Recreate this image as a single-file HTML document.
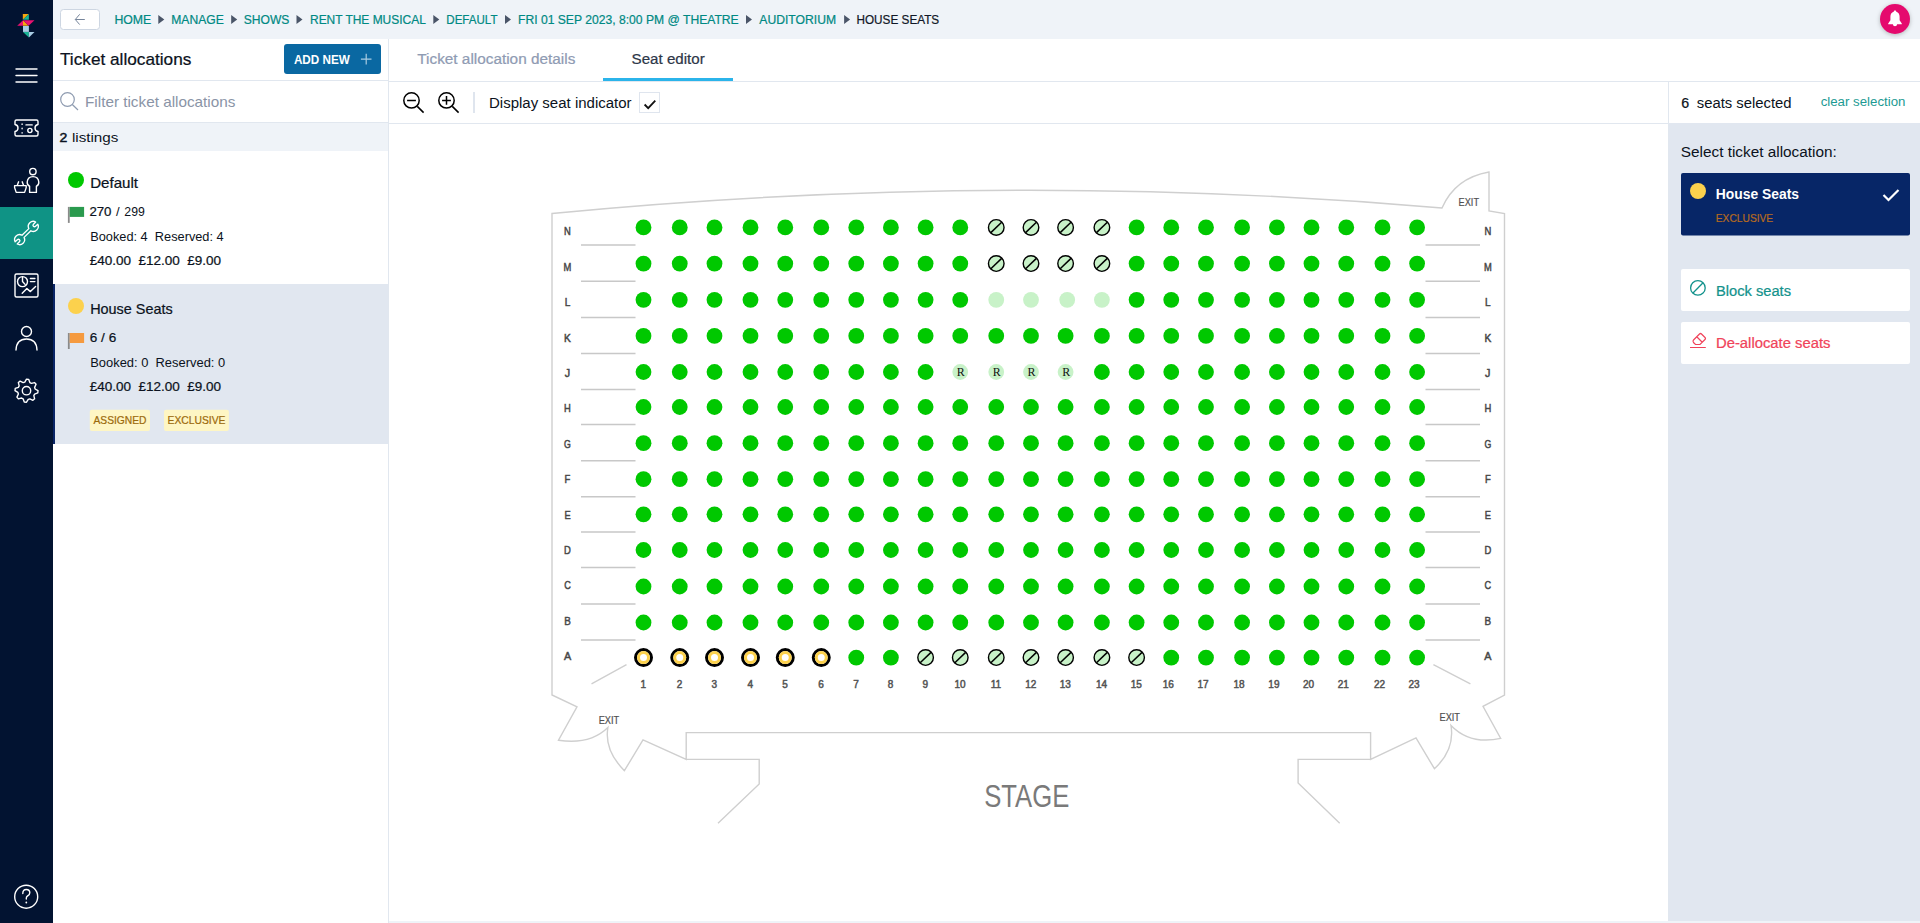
<!DOCTYPE html>
<html><head><meta charset="utf-8"><title>Seat editor</title>
<style>
html,body{margin:0;padding:0;width:1920px;height:923px;overflow:hidden;background:#fff;}
svg{position:absolute;left:0;top:0;display:block;font-family:"Liberation Sans", sans-serif;}
</style></head><body>
<svg width="1920" height="923" viewBox="0 0 1920 923">
<rect x="0" y="0" width="1920" height="923" fill="#ffffff" />
<rect x="53" y="0" width="1867" height="39" fill="#eff3f8" />
<rect x="0" y="0" width="53" height="923" fill="#021331" />
<rect x="0" y="207" width="53" height="52" fill="#0f9385" />
<rect x="388" y="39" width="1" height="884" fill="#e1e7ef" />
<rect x="53" y="80" width="335" height="1" fill="#e1e7ef" />
<rect x="53" y="122" width="335" height="1" fill="#e1e7ef" />
<rect x="53" y="123" width="335" height="28" fill="#eff3f8" />
<rect x="53" y="284" width="335" height="160" fill="#e1e7f0" />
<rect x="53" y="284" width="2" height="160" fill="#0a2566" />
<rect x="389" y="81" width="1531" height="1" fill="#e1e7ef" />
<rect x="603" y="78" width="130" height="3" fill="#2bb4ea" />
<rect x="389" y="123" width="1279" height="1" fill="#e1e7ef" />
<rect x="1668" y="82" width="1" height="839" fill="#e1e7ef" />
<rect x="1669" y="123" width="251" height="798" fill="#e1e7f0" />
<rect x="389" y="921" width="1531" height="2" fill="#eff3f8" />
<rect x="60.5" y="9.5" width="39" height="20" rx="3" fill="#fff" stroke="#cdd6e2" stroke-width="1"/>
<path d="M75.3 19.5 H84.8 M79.7 14.3 L75.3 19.5 L79.7 24.6" fill="none" stroke="#76859b" stroke-width="1"/>
<path d="M158.3 15 L164.3 19.5 L158.3 24 Z" fill="#4a5568"/>
<path d="M231.2 15 L237.2 19.5 L231.2 24 Z" fill="#4a5568"/>
<path d="M296.5 15 L302.5 19.5 L296.5 24 Z" fill="#4a5568"/>
<path d="M433.3 15 L439.3 19.5 L433.3 24 Z" fill="#4a5568"/>
<path d="M505 15 L511 19.5 L505 24 Z" fill="#4a5568"/>
<path d="M746 15 L752 19.5 L746 24 Z" fill="#4a5568"/>
<path d="M844.1 15 L850.1 19.5 L844.1 24 Z" fill="#4a5568"/>
<circle cx="1895" cy="19" r="15" fill="#e50a6e" style="filter:drop-shadow(0 1px 2px rgba(0,0,0,.25))"/>
<path d="M1895 10.5 c-0.8 0 -1.2 0.6 -1.3 1.2 c-2.2 0.6 -3.3 2.6 -3.3 5 v3.5 l-2.2 3.2 v0.9 h13.6 v-0.9 l-2.2 -3.2 v-3.5 c0 -2.4 -1.1 -4.4 -3.3 -5 c-0.1 -0.6 -0.5 -1.2 -1.3 -1.2 z M1892.9 24.2 h4.2 a2.1 2.1 0 0 1 -4.2 0 z" fill="#fff"/>
<g>
<polygon points="22.8,14 28.9,14 22.8,19.8" fill="#f6a50e"/>
<polygon points="28.9,14 28.9,19.8 22.8,19.8" fill="#17b394"/>
<polygon points="17.2,25.7 23,20.2 23,25.7" fill="#ea1170"/>
<polygon points="23,20.2 23,25.7 28.6,25.7" fill="#f6a50e"/>
<polygon points="23,20.2 34.5,20.2 28.6,25.7" fill="#ea1170"/>
<rect x="23" y="26" width="5.9" height="5.9" fill="#a8cce4"/>
<polygon points="23,31.9 28.9,31.9 28.9,37.5" fill="#17b394"/>
<polygon points="28.9,31.9 34.5,31.9 28.9,37.5" fill="#a8cce4"/>
</g>
<path d="M16 69 H37 M16 75.5 H37 M16 82 H37" stroke="#fff" fill="none" stroke-width="1.4" stroke-linecap="round" stroke-linejoin="round"/>
<path d="M16.5 120 H36.5 Q38 120 38 121.5 V124.5 Q35 125 35 128 Q35 131 38 131.5 V134.5 Q38 136 36.5 136 H16.5 Q15 136 15 134.5 V131.5 Q18 131 18 128 Q18 125 15 124.5 V121.5 Q15 120 16.5 120 Z M22.1 124 v0.4 M22.1 128.3 v0.4 M22.1 132.7 v0.4 M26 124.9 H32.2" stroke="#fff" fill="none" stroke-width="1.4" stroke-linecap="round" stroke-linejoin="round"/><circle cx="29.9" cy="130.5" r="2.1" stroke="#fff" fill="none" stroke-width="1.4" stroke-linecap="round" stroke-linejoin="round"/>
<circle cx="32.9" cy="171.6" r="3.2" stroke="#fff" fill="none" stroke-width="1.4" stroke-linecap="round" stroke-linejoin="round"/>
<path d="M29.6 192.4 V186.2 Q27 185.2 27.2 182 Q27.6 176.6 33 176.6 Q38.4 176.6 38.8 182 Q39 185.2 36.4 186.2 V192.4 Z" stroke="#fff" fill="none" stroke-width="1.4" stroke-linecap="round" stroke-linejoin="round"/>
<path d="M14.6 185.6 H26.2 V187.6 L24.6 192.4 H16.2 L14.6 187.6 Z M17.2 185.6 L18.6 181.8 M23.6 185.6 L22.2 181.8" stroke="#fff" fill="none" stroke-width="1.4" stroke-linecap="round" stroke-linejoin="round"/>
<g transform="translate(26.45,233) rotate(-44)"><path d="M -4.73 -1.5 L 4.73 -1.5 A 5 5 0 0 1 14.27 -1.5 L 11.2 -1.5 A 1.5 1.5 0 0 0 11.2 1.5 L 14.27 1.5 A 5 5 0 0 1 4.73 1.5 L -4.73 1.5 A 5 5 0 0 1 -14.27 1.5 L -11.2 1.5 A 1.5 1.5 0 0 0 -11.2 -1.5 L -14.27 -1.5 A 5 5 0 0 1 -4.73 -1.5 Z" stroke="#fff" fill="none" stroke-width="1.35" stroke-linejoin="round"/></g>
<rect x="15" y="274" width="23" height="23" rx="1.5" stroke="#fff" fill="none" stroke-width="1.4" stroke-linecap="round" stroke-linejoin="round"/><circle cx="22.5" cy="281.6" r="5" stroke="#fff" fill="none" stroke-width="1.4" stroke-linecap="round" stroke-linejoin="round"/><path d="M22.5 276.8 V281.5 L25.1 284.4 M30.4 278.5 H34.9 M30.4 281.6 H34.9 M22.2 293.3 L26.9 288.6 L30.4 291.6 L35.6 286.4" stroke="#fff" fill="none" stroke-width="1.4" stroke-linecap="round" stroke-linejoin="round"/>
<circle cx="26.5" cy="331.5" r="5" stroke="#fff" fill="none" stroke-width="1.4" stroke-linecap="round" stroke-linejoin="round"/><path d="M16 350 Q16.5 339 26.5 339 Q36.5 339 37 350" stroke="#fff" fill="none" stroke-width="1.4" stroke-linecap="round" stroke-linejoin="round"/>
<polygon points="26.50,379.20 28.74,379.42 29.87,382.57 31.39,383.38 34.63,382.57 36.06,384.31 34.63,387.33 35.13,388.98 38.00,390.70 37.78,392.94 34.63,394.07 33.82,395.59 34.63,398.83 32.89,400.26 29.87,398.83 28.22,399.33 26.50,402.20 24.26,401.98 23.13,398.83 21.61,398.02 18.37,398.83 16.94,397.09 18.37,394.07 17.87,392.42 15.00,390.70 15.22,388.46 18.37,387.33 19.18,385.81 18.37,382.57 20.11,381.14 23.13,382.57 24.78,382.07" stroke="#fff" fill="none" stroke-width="1.4" stroke-linecap="round" stroke-linejoin="round"/><circle cx="26.5" cy="390.7" r="4.2" stroke="#fff" fill="none" stroke-width="1.4" stroke-linecap="round" stroke-linejoin="round"/>
<circle cx="26.2" cy="896.7" r="11.5" stroke="#fff" fill="none" stroke-width="1.4" stroke-linecap="round" stroke-linejoin="round"/><path d="M22.8 893.5 Q22.8 889.5 26.3 889.5 Q29.8 889.5 29.8 892.8 Q29.8 895 27.5 896 Q26.3 896.6 26.3 898.3 V899" stroke="#fff" fill="none" stroke-width="1.4" stroke-linecap="round" stroke-linejoin="round"/><circle cx="26.3" cy="902.5" r="0.9" fill="#fff"/>
<rect x="284" y="44" width="97" height="30" rx="3" fill="#0a68a2"/>
<path d="M366.2 53.8 V64.4 M360.9 59.1 H371.5" stroke="#a9cbe2" stroke-width="1.2" fill="none"/>
<circle cx="67.5" cy="99.5" r="6.8" fill="none" stroke="#8e9bb0" stroke-width="1.2"/><path d="M72.3 104.5 L78 110" stroke="#8e9bb0" stroke-width="1.2"/>
<circle cx="76" cy="180" r="8" fill="#00c800"/>
<rect x="67.9" y="206.9" width="1.8" height="16" fill="#8a8a8a"/><rect x="69.7" y="206.9" width="14.4" height="10" fill="#2a9a4e"/>
<circle cx="76" cy="306" r="8" fill="#fcd14d"/>
<rect x="67.9" y="333" width="1.8" height="16" fill="#8a8a8a"/><rect x="69.7" y="333" width="14.4" height="10" fill="#f59a3f"/>
<rect x="89.8" y="409.8" width="60.2" height="21.2" rx="2" fill="#fef6c4"/><rect x="164" y="409.8" width="64.9" height="21.2" rx="2" fill="#fef6c4"/>
<circle cx="411.5" cy="100.4" r="7.7" fill="none" stroke="#000" stroke-width="1.5"/><path d="M407.1 100.4 H415.9 M417.3 106.4 L423.6 112.6" stroke="#000" stroke-width="1.5" fill="none"/>
<circle cx="446.5" cy="100.4" r="7.7" fill="none" stroke="#000" stroke-width="1.5"/><path d="M442.1 100.4 H450.9 M446.5 96.1 V104.7 M452.3 106.4 L458.6 112.6" stroke="#000" stroke-width="1.5" fill="none"/>
<rect x="473" y="92" width="2" height="21" fill="#dfe5ee" />
<rect x="639.5" y="92.5" width="20" height="20" fill="#fff" stroke="#dfe5ee" stroke-width="1"/>
<path d="M644.6 104.5 L648.2 108.2 L655.3 100.7" stroke="#111" stroke-width="1.8" fill="none"/>
<rect x="1681" y="173" width="229" height="62.6" rx="2" fill="#072667"/>
<circle cx="1698" cy="191" r="8" fill="#fcd14d"/>
<path d="M1883.5 195 L1888.5 200 L1898.5 190" stroke="#fff" stroke-width="2.2" fill="none"/>
<rect x="1681" y="269" width="229" height="42" rx="2" fill="#fff"/>
<rect x="1681" y="322" width="229" height="42" rx="2" fill="#fff"/>
<circle cx="1697.9" cy="287.9" r="7.3" fill="none" stroke="#13928c" stroke-width="1.3"/><path d="M1693 293 L1702.8 283" stroke="#13928c" stroke-width="1.3"/>
<path d="M1693.5 340 L1699.5 334 Q1700.5 333 1701.5 334 L1705 337.5 Q1706 338.5 1705 339.5 L1700 344.5 H1695.5 L1693.5 342.5 Q1692.5 341 1693.5 340 Z M1697 337 L1702 342 M1690 347.5 H1705.8" stroke="#f0435a" stroke-width="1.2" fill="none"/>
<path d="M552 695 V213.5 Q1000 170 1442 208 Q1455 178 1489 172 V211 L1504.5 213.5 V695 L1483 706.3 L1500.7 738.4 Q1470 745 1451 725.4 Q1455 750 1434.4 768.7 L1416 737.8 L1370.6 759.4 V732.6 H686.2 V759.4 L643 739.8 L624.4 770.7 Q604 750 607.9 727.5 Q590 745 558.5 740.2 L577 706.9 Z" stroke="#cfcfcf" stroke-width="1.4" fill="none"/>
<path d="M686.2 759.4 H759.2 V784 L718 823.2 M1370.6 759.4 H1298.1 V783 L1339.7 823.2 M591.5 683.8 L626.5 664.7 M1433.4 664.7 L1470.4 683.8" stroke="#cfcfcf" stroke-width="1.4" fill="none"/>
<path d="M581 245.0 H635.5 M1425.5 245.0 H1480" stroke="#c8c8c8" stroke-width="1.5"/>
<path d="M581 281.2 H635.5 M1425.5 281.2 H1480" stroke="#c8c8c8" stroke-width="1.5"/>
<path d="M581 317.4 H635.5 M1425.5 317.4 H1480" stroke="#c8c8c8" stroke-width="1.5"/>
<path d="M581 353.5 H635.5 M1425.5 353.5 H1480" stroke="#c8c8c8" stroke-width="1.5"/>
<path d="M581 389.6 H635.5 M1425.5 389.6 H1480" stroke="#c8c8c8" stroke-width="1.5"/>
<path d="M581 424.6 H635.5 M1425.5 424.6 H1480" stroke="#c8c8c8" stroke-width="1.5"/>
<path d="M581 460.8 H635.5 M1425.5 460.8 H1480" stroke="#c8c8c8" stroke-width="1.5"/>
<path d="M581 496.8 H635.5 M1425.5 496.8 H1480" stroke="#c8c8c8" stroke-width="1.5"/>
<path d="M581 531.9 H635.5 M1425.5 531.9 H1480" stroke="#c8c8c8" stroke-width="1.5"/>
<path d="M581 567.6 H635.5 M1425.5 567.6 H1480" stroke="#c8c8c8" stroke-width="1.5"/>
<path d="M581 604.1 H635.5 M1425.5 604.1 H1480" stroke="#c8c8c8" stroke-width="1.5"/>
<path d="M581 640.1 H635.5 M1425.5 640.1 H1480" stroke="#c8c8c8" stroke-width="1.5"/>
<circle cx="643.5" cy="227.4" r="7.9" fill="#00c800"/>
<circle cx="679.75" cy="227.4" r="7.9" fill="#00c800"/>
<circle cx="714.5" cy="227.4" r="7.9" fill="#00c800"/>
<circle cx="750.5" cy="227.4" r="7.9" fill="#00c800"/>
<circle cx="785.25" cy="227.4" r="7.9" fill="#00c800"/>
<circle cx="821.25" cy="227.4" r="7.9" fill="#00c800"/>
<circle cx="856.25" cy="227.4" r="7.9" fill="#00c800"/>
<circle cx="890.9" cy="227.4" r="7.9" fill="#00c800"/>
<circle cx="925.6" cy="227.4" r="7.9" fill="#00c800"/>
<circle cx="960.25" cy="227.4" r="7.9" fill="#00c800"/>
<circle cx="996.25" cy="227.4" r="7.8" fill="#c8f2c8" stroke="#000" stroke-width="1.4"/><path d="M990.85 232.60 L1001.65 222.20" stroke="#000" stroke-width="1.5"/>
<circle cx="1031" cy="227.4" r="7.8" fill="#c8f2c8" stroke="#000" stroke-width="1.4"/><path d="M1025.60 232.60 L1036.40 222.20" stroke="#000" stroke-width="1.5"/>
<circle cx="1065.6" cy="227.4" r="7.8" fill="#c8f2c8" stroke="#000" stroke-width="1.4"/><path d="M1060.20 232.60 L1071.00 222.20" stroke="#000" stroke-width="1.5"/>
<circle cx="1101.9" cy="227.4" r="7.8" fill="#c8f2c8" stroke="#000" stroke-width="1.4"/><path d="M1096.50 232.60 L1107.30 222.20" stroke="#000" stroke-width="1.5"/>
<circle cx="1136.6" cy="227.4" r="7.9" fill="#00c800"/>
<circle cx="1171.25" cy="227.4" r="7.9" fill="#00c800"/>
<circle cx="1206" cy="227.4" r="7.9" fill="#00c800"/>
<circle cx="1242.1" cy="227.4" r="7.9" fill="#00c800"/>
<circle cx="1276.9" cy="227.4" r="7.9" fill="#00c800"/>
<circle cx="1311.5" cy="227.4" r="7.9" fill="#00c800"/>
<circle cx="1346.25" cy="227.4" r="7.9" fill="#00c800"/>
<circle cx="1382.5" cy="227.4" r="7.9" fill="#00c800"/>
<circle cx="1417.1" cy="227.4" r="7.9" fill="#00c800"/>
<circle cx="643.5" cy="263.6" r="7.9" fill="#00c800"/>
<circle cx="679.75" cy="263.6" r="7.9" fill="#00c800"/>
<circle cx="714.5" cy="263.6" r="7.9" fill="#00c800"/>
<circle cx="750.5" cy="263.6" r="7.9" fill="#00c800"/>
<circle cx="785.25" cy="263.6" r="7.9" fill="#00c800"/>
<circle cx="821.25" cy="263.6" r="7.9" fill="#00c800"/>
<circle cx="856.25" cy="263.6" r="7.9" fill="#00c800"/>
<circle cx="890.9" cy="263.6" r="7.9" fill="#00c800"/>
<circle cx="925.6" cy="263.6" r="7.9" fill="#00c800"/>
<circle cx="960.25" cy="263.6" r="7.9" fill="#00c800"/>
<circle cx="996.25" cy="263.6" r="7.8" fill="#c8f2c8" stroke="#000" stroke-width="1.4"/><path d="M990.85 268.80 L1001.65 258.40" stroke="#000" stroke-width="1.5"/>
<circle cx="1031" cy="263.6" r="7.8" fill="#c8f2c8" stroke="#000" stroke-width="1.4"/><path d="M1025.60 268.80 L1036.40 258.40" stroke="#000" stroke-width="1.5"/>
<circle cx="1065.6" cy="263.6" r="7.8" fill="#c8f2c8" stroke="#000" stroke-width="1.4"/><path d="M1060.20 268.80 L1071.00 258.40" stroke="#000" stroke-width="1.5"/>
<circle cx="1101.9" cy="263.6" r="7.8" fill="#c8f2c8" stroke="#000" stroke-width="1.4"/><path d="M1096.50 268.80 L1107.30 258.40" stroke="#000" stroke-width="1.5"/>
<circle cx="1136.6" cy="263.6" r="7.9" fill="#00c800"/>
<circle cx="1171.25" cy="263.6" r="7.9" fill="#00c800"/>
<circle cx="1206" cy="263.6" r="7.9" fill="#00c800"/>
<circle cx="1242.1" cy="263.6" r="7.9" fill="#00c800"/>
<circle cx="1276.9" cy="263.6" r="7.9" fill="#00c800"/>
<circle cx="1311.5" cy="263.6" r="7.9" fill="#00c800"/>
<circle cx="1346.25" cy="263.6" r="7.9" fill="#00c800"/>
<circle cx="1382.5" cy="263.6" r="7.9" fill="#00c800"/>
<circle cx="1417.1" cy="263.6" r="7.9" fill="#00c800"/>
<circle cx="643.5" cy="299.8" r="7.9" fill="#00c800"/>
<circle cx="679.75" cy="299.8" r="7.9" fill="#00c800"/>
<circle cx="714.5" cy="299.8" r="7.9" fill="#00c800"/>
<circle cx="750.5" cy="299.8" r="7.9" fill="#00c800"/>
<circle cx="785.25" cy="299.8" r="7.9" fill="#00c800"/>
<circle cx="821.25" cy="299.8" r="7.9" fill="#00c800"/>
<circle cx="856.25" cy="299.8" r="7.9" fill="#00c800"/>
<circle cx="890.9" cy="299.8" r="7.9" fill="#00c800"/>
<circle cx="925.6" cy="299.8" r="7.9" fill="#00c800"/>
<circle cx="960.25" cy="299.8" r="7.9" fill="#00c800"/>
<circle cx="996.25" cy="299.8" r="7.9" fill="#c8f2c8"/>
<circle cx="1031" cy="299.8" r="7.9" fill="#c8f2c8"/>
<circle cx="1067.1999999999998" cy="299.8" r="7.9" fill="#c8f2c8"/>
<circle cx="1101.9" cy="299.8" r="7.9" fill="#c8f2c8"/>
<circle cx="1136.6" cy="299.8" r="7.9" fill="#00c800"/>
<circle cx="1171.25" cy="299.8" r="7.9" fill="#00c800"/>
<circle cx="1206" cy="299.8" r="7.9" fill="#00c800"/>
<circle cx="1242.1" cy="299.8" r="7.9" fill="#00c800"/>
<circle cx="1276.9" cy="299.8" r="7.9" fill="#00c800"/>
<circle cx="1311.5" cy="299.8" r="7.9" fill="#00c800"/>
<circle cx="1346.25" cy="299.8" r="7.9" fill="#00c800"/>
<circle cx="1382.5" cy="299.8" r="7.9" fill="#00c800"/>
<circle cx="1417.1" cy="299.8" r="7.9" fill="#00c800"/>
<circle cx="643.5" cy="335.9" r="7.9" fill="#00c800"/>
<circle cx="679.75" cy="335.9" r="7.9" fill="#00c800"/>
<circle cx="714.5" cy="335.9" r="7.9" fill="#00c800"/>
<circle cx="750.5" cy="335.9" r="7.9" fill="#00c800"/>
<circle cx="785.25" cy="335.9" r="7.9" fill="#00c800"/>
<circle cx="821.25" cy="335.9" r="7.9" fill="#00c800"/>
<circle cx="856.25" cy="335.9" r="7.9" fill="#00c800"/>
<circle cx="890.9" cy="335.9" r="7.9" fill="#00c800"/>
<circle cx="925.6" cy="335.9" r="7.9" fill="#00c800"/>
<circle cx="960.25" cy="335.9" r="7.9" fill="#00c800"/>
<circle cx="996.25" cy="335.9" r="7.9" fill="#00c800"/>
<circle cx="1031" cy="335.9" r="7.9" fill="#00c800"/>
<circle cx="1065.6" cy="335.9" r="7.9" fill="#00c800"/>
<circle cx="1101.9" cy="335.9" r="7.9" fill="#00c800"/>
<circle cx="1136.6" cy="335.9" r="7.9" fill="#00c800"/>
<circle cx="1171.25" cy="335.9" r="7.9" fill="#00c800"/>
<circle cx="1206" cy="335.9" r="7.9" fill="#00c800"/>
<circle cx="1242.1" cy="335.9" r="7.9" fill="#00c800"/>
<circle cx="1276.9" cy="335.9" r="7.9" fill="#00c800"/>
<circle cx="1311.5" cy="335.9" r="7.9" fill="#00c800"/>
<circle cx="1346.25" cy="335.9" r="7.9" fill="#00c800"/>
<circle cx="1382.5" cy="335.9" r="7.9" fill="#00c800"/>
<circle cx="1417.1" cy="335.9" r="7.9" fill="#00c800"/>
<circle cx="643.5" cy="372" r="7.9" fill="#00c800"/>
<circle cx="679.75" cy="372" r="7.9" fill="#00c800"/>
<circle cx="714.5" cy="372" r="7.9" fill="#00c800"/>
<circle cx="750.5" cy="372" r="7.9" fill="#00c800"/>
<circle cx="785.25" cy="372" r="7.9" fill="#00c800"/>
<circle cx="821.25" cy="372" r="7.9" fill="#00c800"/>
<circle cx="856.25" cy="372" r="7.9" fill="#00c800"/>
<circle cx="890.9" cy="372" r="7.9" fill="#00c800"/>
<circle cx="925.6" cy="372" r="7.9" fill="#00c800"/>
<circle cx="960.25" cy="372" r="7.9" fill="#c8f2c8"/>
<circle cx="996.25" cy="372" r="7.9" fill="#c8f2c8"/>
<circle cx="1031" cy="372" r="7.9" fill="#c8f2c8"/>
<circle cx="1065.6" cy="372" r="7.9" fill="#c8f2c8"/>
<circle cx="1101.9" cy="372" r="7.9" fill="#00c800"/>
<circle cx="1136.6" cy="372" r="7.9" fill="#00c800"/>
<circle cx="1171.25" cy="372" r="7.9" fill="#00c800"/>
<circle cx="1206" cy="372" r="7.9" fill="#00c800"/>
<circle cx="1242.1" cy="372" r="7.9" fill="#00c800"/>
<circle cx="1276.9" cy="372" r="7.9" fill="#00c800"/>
<circle cx="1311.5" cy="372" r="7.9" fill="#00c800"/>
<circle cx="1346.25" cy="372" r="7.9" fill="#00c800"/>
<circle cx="1382.5" cy="372" r="7.9" fill="#00c800"/>
<circle cx="1417.1" cy="372" r="7.9" fill="#00c800"/>
<circle cx="643.5" cy="407" r="7.9" fill="#00c800"/>
<circle cx="679.75" cy="407" r="7.9" fill="#00c800"/>
<circle cx="714.5" cy="407" r="7.9" fill="#00c800"/>
<circle cx="750.5" cy="407" r="7.9" fill="#00c800"/>
<circle cx="785.25" cy="407" r="7.9" fill="#00c800"/>
<circle cx="821.25" cy="407" r="7.9" fill="#00c800"/>
<circle cx="856.25" cy="407" r="7.9" fill="#00c800"/>
<circle cx="890.9" cy="407" r="7.9" fill="#00c800"/>
<circle cx="925.6" cy="407" r="7.9" fill="#00c800"/>
<circle cx="960.25" cy="407" r="7.9" fill="#00c800"/>
<circle cx="996.25" cy="407" r="7.9" fill="#00c800"/>
<circle cx="1031" cy="407" r="7.9" fill="#00c800"/>
<circle cx="1065.6" cy="407" r="7.9" fill="#00c800"/>
<circle cx="1101.9" cy="407" r="7.9" fill="#00c800"/>
<circle cx="1136.6" cy="407" r="7.9" fill="#00c800"/>
<circle cx="1171.25" cy="407" r="7.9" fill="#00c800"/>
<circle cx="1206" cy="407" r="7.9" fill="#00c800"/>
<circle cx="1242.1" cy="407" r="7.9" fill="#00c800"/>
<circle cx="1276.9" cy="407" r="7.9" fill="#00c800"/>
<circle cx="1311.5" cy="407" r="7.9" fill="#00c800"/>
<circle cx="1346.25" cy="407" r="7.9" fill="#00c800"/>
<circle cx="1382.5" cy="407" r="7.9" fill="#00c800"/>
<circle cx="1417.1" cy="407" r="7.9" fill="#00c800"/>
<circle cx="643.5" cy="443.2" r="7.9" fill="#00c800"/>
<circle cx="679.75" cy="443.2" r="7.9" fill="#00c800"/>
<circle cx="714.5" cy="443.2" r="7.9" fill="#00c800"/>
<circle cx="750.5" cy="443.2" r="7.9" fill="#00c800"/>
<circle cx="785.25" cy="443.2" r="7.9" fill="#00c800"/>
<circle cx="821.25" cy="443.2" r="7.9" fill="#00c800"/>
<circle cx="856.25" cy="443.2" r="7.9" fill="#00c800"/>
<circle cx="890.9" cy="443.2" r="7.9" fill="#00c800"/>
<circle cx="925.6" cy="443.2" r="7.9" fill="#00c800"/>
<circle cx="960.25" cy="443.2" r="7.9" fill="#00c800"/>
<circle cx="996.25" cy="443.2" r="7.9" fill="#00c800"/>
<circle cx="1031" cy="443.2" r="7.9" fill="#00c800"/>
<circle cx="1065.6" cy="443.2" r="7.9" fill="#00c800"/>
<circle cx="1101.9" cy="443.2" r="7.9" fill="#00c800"/>
<circle cx="1136.6" cy="443.2" r="7.9" fill="#00c800"/>
<circle cx="1171.25" cy="443.2" r="7.9" fill="#00c800"/>
<circle cx="1206" cy="443.2" r="7.9" fill="#00c800"/>
<circle cx="1242.1" cy="443.2" r="7.9" fill="#00c800"/>
<circle cx="1276.9" cy="443.2" r="7.9" fill="#00c800"/>
<circle cx="1311.5" cy="443.2" r="7.9" fill="#00c800"/>
<circle cx="1346.25" cy="443.2" r="7.9" fill="#00c800"/>
<circle cx="1382.5" cy="443.2" r="7.9" fill="#00c800"/>
<circle cx="1417.1" cy="443.2" r="7.9" fill="#00c800"/>
<circle cx="643.5" cy="479.2" r="7.9" fill="#00c800"/>
<circle cx="679.75" cy="479.2" r="7.9" fill="#00c800"/>
<circle cx="714.5" cy="479.2" r="7.9" fill="#00c800"/>
<circle cx="750.5" cy="479.2" r="7.9" fill="#00c800"/>
<circle cx="785.25" cy="479.2" r="7.9" fill="#00c800"/>
<circle cx="821.25" cy="479.2" r="7.9" fill="#00c800"/>
<circle cx="856.25" cy="479.2" r="7.9" fill="#00c800"/>
<circle cx="890.9" cy="479.2" r="7.9" fill="#00c800"/>
<circle cx="925.6" cy="479.2" r="7.9" fill="#00c800"/>
<circle cx="960.25" cy="479.2" r="7.9" fill="#00c800"/>
<circle cx="996.25" cy="479.2" r="7.9" fill="#00c800"/>
<circle cx="1031" cy="479.2" r="7.9" fill="#00c800"/>
<circle cx="1065.6" cy="479.2" r="7.9" fill="#00c800"/>
<circle cx="1101.9" cy="479.2" r="7.9" fill="#00c800"/>
<circle cx="1136.6" cy="479.2" r="7.9" fill="#00c800"/>
<circle cx="1171.25" cy="479.2" r="7.9" fill="#00c800"/>
<circle cx="1206" cy="479.2" r="7.9" fill="#00c800"/>
<circle cx="1242.1" cy="479.2" r="7.9" fill="#00c800"/>
<circle cx="1276.9" cy="479.2" r="7.9" fill="#00c800"/>
<circle cx="1311.5" cy="479.2" r="7.9" fill="#00c800"/>
<circle cx="1346.25" cy="479.2" r="7.9" fill="#00c800"/>
<circle cx="1382.5" cy="479.2" r="7.9" fill="#00c800"/>
<circle cx="1417.1" cy="479.2" r="7.9" fill="#00c800"/>
<circle cx="643.5" cy="514.3" r="7.9" fill="#00c800"/>
<circle cx="679.75" cy="514.3" r="7.9" fill="#00c800"/>
<circle cx="714.5" cy="514.3" r="7.9" fill="#00c800"/>
<circle cx="750.5" cy="514.3" r="7.9" fill="#00c800"/>
<circle cx="785.25" cy="514.3" r="7.9" fill="#00c800"/>
<circle cx="821.25" cy="514.3" r="7.9" fill="#00c800"/>
<circle cx="856.25" cy="514.3" r="7.9" fill="#00c800"/>
<circle cx="890.9" cy="514.3" r="7.9" fill="#00c800"/>
<circle cx="925.6" cy="514.3" r="7.9" fill="#00c800"/>
<circle cx="960.25" cy="514.3" r="7.9" fill="#00c800"/>
<circle cx="996.25" cy="514.3" r="7.9" fill="#00c800"/>
<circle cx="1031" cy="514.3" r="7.9" fill="#00c800"/>
<circle cx="1065.6" cy="514.3" r="7.9" fill="#00c800"/>
<circle cx="1101.9" cy="514.3" r="7.9" fill="#00c800"/>
<circle cx="1136.6" cy="514.3" r="7.9" fill="#00c800"/>
<circle cx="1171.25" cy="514.3" r="7.9" fill="#00c800"/>
<circle cx="1206" cy="514.3" r="7.9" fill="#00c800"/>
<circle cx="1242.1" cy="514.3" r="7.9" fill="#00c800"/>
<circle cx="1276.9" cy="514.3" r="7.9" fill="#00c800"/>
<circle cx="1311.5" cy="514.3" r="7.9" fill="#00c800"/>
<circle cx="1346.25" cy="514.3" r="7.9" fill="#00c800"/>
<circle cx="1382.5" cy="514.3" r="7.9" fill="#00c800"/>
<circle cx="1417.1" cy="514.3" r="7.9" fill="#00c800"/>
<circle cx="643.5" cy="550" r="7.9" fill="#00c800"/>
<circle cx="679.75" cy="550" r="7.9" fill="#00c800"/>
<circle cx="714.5" cy="550" r="7.9" fill="#00c800"/>
<circle cx="750.5" cy="550" r="7.9" fill="#00c800"/>
<circle cx="785.25" cy="550" r="7.9" fill="#00c800"/>
<circle cx="821.25" cy="550" r="7.9" fill="#00c800"/>
<circle cx="856.25" cy="550" r="7.9" fill="#00c800"/>
<circle cx="890.9" cy="550" r="7.9" fill="#00c800"/>
<circle cx="925.6" cy="550" r="7.9" fill="#00c800"/>
<circle cx="960.25" cy="550" r="7.9" fill="#00c800"/>
<circle cx="996.25" cy="550" r="7.9" fill="#00c800"/>
<circle cx="1031" cy="550" r="7.9" fill="#00c800"/>
<circle cx="1065.6" cy="550" r="7.9" fill="#00c800"/>
<circle cx="1101.9" cy="550" r="7.9" fill="#00c800"/>
<circle cx="1136.6" cy="550" r="7.9" fill="#00c800"/>
<circle cx="1171.25" cy="550" r="7.9" fill="#00c800"/>
<circle cx="1206" cy="550" r="7.9" fill="#00c800"/>
<circle cx="1242.1" cy="550" r="7.9" fill="#00c800"/>
<circle cx="1276.9" cy="550" r="7.9" fill="#00c800"/>
<circle cx="1311.5" cy="550" r="7.9" fill="#00c800"/>
<circle cx="1346.25" cy="550" r="7.9" fill="#00c800"/>
<circle cx="1382.5" cy="550" r="7.9" fill="#00c800"/>
<circle cx="1417.1" cy="550" r="7.9" fill="#00c800"/>
<circle cx="643.5" cy="586.5" r="7.9" fill="#00c800"/>
<circle cx="679.75" cy="586.5" r="7.9" fill="#00c800"/>
<circle cx="714.5" cy="586.5" r="7.9" fill="#00c800"/>
<circle cx="750.5" cy="586.5" r="7.9" fill="#00c800"/>
<circle cx="785.25" cy="586.5" r="7.9" fill="#00c800"/>
<circle cx="821.25" cy="586.5" r="7.9" fill="#00c800"/>
<circle cx="856.25" cy="586.5" r="7.9" fill="#00c800"/>
<circle cx="890.9" cy="586.5" r="7.9" fill="#00c800"/>
<circle cx="925.6" cy="586.5" r="7.9" fill="#00c800"/>
<circle cx="960.25" cy="586.5" r="7.9" fill="#00c800"/>
<circle cx="996.25" cy="586.5" r="7.9" fill="#00c800"/>
<circle cx="1031" cy="586.5" r="7.9" fill="#00c800"/>
<circle cx="1065.6" cy="586.5" r="7.9" fill="#00c800"/>
<circle cx="1101.9" cy="586.5" r="7.9" fill="#00c800"/>
<circle cx="1136.6" cy="586.5" r="7.9" fill="#00c800"/>
<circle cx="1171.25" cy="586.5" r="7.9" fill="#00c800"/>
<circle cx="1206" cy="586.5" r="7.9" fill="#00c800"/>
<circle cx="1242.1" cy="586.5" r="7.9" fill="#00c800"/>
<circle cx="1276.9" cy="586.5" r="7.9" fill="#00c800"/>
<circle cx="1311.5" cy="586.5" r="7.9" fill="#00c800"/>
<circle cx="1346.25" cy="586.5" r="7.9" fill="#00c800"/>
<circle cx="1382.5" cy="586.5" r="7.9" fill="#00c800"/>
<circle cx="1417.1" cy="586.5" r="7.9" fill="#00c800"/>
<circle cx="643.5" cy="622.5" r="7.9" fill="#00c800"/>
<circle cx="679.75" cy="622.5" r="7.9" fill="#00c800"/>
<circle cx="714.5" cy="622.5" r="7.9" fill="#00c800"/>
<circle cx="750.5" cy="622.5" r="7.9" fill="#00c800"/>
<circle cx="785.25" cy="622.5" r="7.9" fill="#00c800"/>
<circle cx="821.25" cy="622.5" r="7.9" fill="#00c800"/>
<circle cx="856.25" cy="622.5" r="7.9" fill="#00c800"/>
<circle cx="890.9" cy="622.5" r="7.9" fill="#00c800"/>
<circle cx="925.6" cy="622.5" r="7.9" fill="#00c800"/>
<circle cx="960.25" cy="622.5" r="7.9" fill="#00c800"/>
<circle cx="996.25" cy="622.5" r="7.9" fill="#00c800"/>
<circle cx="1031" cy="622.5" r="7.9" fill="#00c800"/>
<circle cx="1065.6" cy="622.5" r="7.9" fill="#00c800"/>
<circle cx="1101.9" cy="622.5" r="7.9" fill="#00c800"/>
<circle cx="1136.6" cy="622.5" r="7.9" fill="#00c800"/>
<circle cx="1171.25" cy="622.5" r="7.9" fill="#00c800"/>
<circle cx="1206" cy="622.5" r="7.9" fill="#00c800"/>
<circle cx="1242.1" cy="622.5" r="7.9" fill="#00c800"/>
<circle cx="1276.9" cy="622.5" r="7.9" fill="#00c800"/>
<circle cx="1311.5" cy="622.5" r="7.9" fill="#00c800"/>
<circle cx="1346.25" cy="622.5" r="7.9" fill="#00c800"/>
<circle cx="1382.5" cy="622.5" r="7.9" fill="#00c800"/>
<circle cx="1417.1" cy="622.5" r="7.9" fill="#00c800"/>
<circle cx="643.5" cy="657.6" r="8" fill="#fff" stroke="#000" stroke-width="3"/><circle cx="643.5" cy="657.6" r="5" fill="none" stroke="#fcd14d" stroke-width="3"/>
<circle cx="679.75" cy="657.6" r="8" fill="#fff" stroke="#000" stroke-width="3"/><circle cx="679.75" cy="657.6" r="5" fill="none" stroke="#fcd14d" stroke-width="3"/>
<circle cx="714.5" cy="657.6" r="8" fill="#fff" stroke="#000" stroke-width="3"/><circle cx="714.5" cy="657.6" r="5" fill="none" stroke="#fcd14d" stroke-width="3"/>
<circle cx="750.5" cy="657.6" r="8" fill="#fff" stroke="#000" stroke-width="3"/><circle cx="750.5" cy="657.6" r="5" fill="none" stroke="#fcd14d" stroke-width="3"/>
<circle cx="785.25" cy="657.6" r="8" fill="#fff" stroke="#000" stroke-width="3"/><circle cx="785.25" cy="657.6" r="5" fill="none" stroke="#fcd14d" stroke-width="3"/>
<circle cx="821.25" cy="657.6" r="8" fill="#fff" stroke="#000" stroke-width="3"/><circle cx="821.25" cy="657.6" r="5" fill="none" stroke="#fcd14d" stroke-width="3"/>
<circle cx="856.25" cy="657.6" r="7.9" fill="#00c800"/>
<circle cx="890.9" cy="657.6" r="7.9" fill="#00c800"/>
<circle cx="925.6" cy="657.6" r="7.8" fill="#c8f2c8" stroke="#000" stroke-width="1.4"/><path d="M920.20 662.80 L931.00 652.40" stroke="#000" stroke-width="1.5"/>
<circle cx="960.25" cy="657.6" r="7.8" fill="#c8f2c8" stroke="#000" stroke-width="1.4"/><path d="M954.85 662.80 L965.65 652.40" stroke="#000" stroke-width="1.5"/>
<circle cx="996.25" cy="657.6" r="7.8" fill="#c8f2c8" stroke="#000" stroke-width="1.4"/><path d="M990.85 662.80 L1001.65 652.40" stroke="#000" stroke-width="1.5"/>
<circle cx="1031" cy="657.6" r="7.8" fill="#c8f2c8" stroke="#000" stroke-width="1.4"/><path d="M1025.60 662.80 L1036.40 652.40" stroke="#000" stroke-width="1.5"/>
<circle cx="1065.6" cy="657.6" r="7.8" fill="#c8f2c8" stroke="#000" stroke-width="1.4"/><path d="M1060.20 662.80 L1071.00 652.40" stroke="#000" stroke-width="1.5"/>
<circle cx="1101.9" cy="657.6" r="7.8" fill="#c8f2c8" stroke="#000" stroke-width="1.4"/><path d="M1096.50 662.80 L1107.30 652.40" stroke="#000" stroke-width="1.5"/>
<circle cx="1136.6" cy="657.6" r="7.8" fill="#c8f2c8" stroke="#000" stroke-width="1.4"/><path d="M1131.20 662.80 L1142.00 652.40" stroke="#000" stroke-width="1.5"/>
<circle cx="1171.25" cy="657.6" r="7.9" fill="#00c800"/>
<circle cx="1206" cy="657.6" r="7.9" fill="#00c800"/>
<circle cx="1242.1" cy="657.6" r="7.9" fill="#00c800"/>
<circle cx="1276.9" cy="657.6" r="7.9" fill="#00c800"/>
<circle cx="1311.5" cy="657.6" r="7.9" fill="#00c800"/>
<circle cx="1346.25" cy="657.6" r="7.9" fill="#00c800"/>
<circle cx="1382.5" cy="657.6" r="7.9" fill="#00c800"/>
<circle cx="1417.1" cy="657.6" r="7.9" fill="#00c800"/>
<text x="114.40" y="24.00" font-size="13" fill="#008983" font-weight="400" text-anchor="start" textLength="36.85" lengthAdjust="spacingAndGlyphs" stroke="#008983" stroke-width="0.22" >HOME</text>
<text x="171.25" y="24.00" font-size="13" fill="#008983" font-weight="400" text-anchor="start" textLength="52.50" lengthAdjust="spacingAndGlyphs" stroke="#008983" stroke-width="0.22" >MANAGE</text>
<text x="243.75" y="24.00" font-size="13" fill="#008983" font-weight="400" text-anchor="start" textLength="45.65" lengthAdjust="spacingAndGlyphs" stroke="#008983" stroke-width="0.22" >SHOWS</text>
<text x="310.00" y="24.00" font-size="13" fill="#008983" font-weight="400" text-anchor="start" textLength="115.80" lengthAdjust="spacingAndGlyphs" stroke="#008983" stroke-width="0.22" >RENT THE MUSICAL</text>
<text x="446.30" y="24.00" font-size="13" fill="#008983" font-weight="400" text-anchor="start" textLength="51.20" lengthAdjust="spacingAndGlyphs" stroke="#008983" stroke-width="0.22" >DEFAULT</text>
<text x="518.00" y="24.00" font-size="13" fill="#008983" font-weight="400" text-anchor="start" textLength="220.70" lengthAdjust="spacingAndGlyphs" stroke="#008983" stroke-width="0.22" >FRI 01 SEP 2023, 8:00 PM @ THEATRE</text>
<text x="759.30" y="24.00" font-size="13" fill="#008983" font-weight="400" text-anchor="start" textLength="76.80" lengthAdjust="spacingAndGlyphs" stroke="#008983" stroke-width="0.22" >AUDITORIUM</text>
<text x="856.50" y="24.00" font-size="13" fill="#111827" font-weight="400" text-anchor="start" textLength="82.70" lengthAdjust="spacingAndGlyphs" stroke="#111827" stroke-width="0.22" >HOUSE SEATS</text>
<text x="60.00" y="64.90" font-size="16.2" fill="#0b1220" font-weight="400" text-anchor="start" textLength="131.30" lengthAdjust="spacingAndGlyphs" stroke="#0b1220" stroke-width="0.22" >Ticket allocations</text>
<text x="293.90" y="64.40" font-size="13" fill="#fff" font-weight="700" text-anchor="start" textLength="56.00" lengthAdjust="spacingAndGlyphs" >ADD NEW</text>
<text x="85.00" y="107.30" font-size="14.5" fill="#8a94a6" font-weight="400" text-anchor="start" textLength="150.40" lengthAdjust="spacingAndGlyphs" >Filter ticket allocations</text>
<text x="59.50" y="141.90" font-size="13.5" fill="#0b1220" font-weight="400" text-anchor="start" textLength="7.80" lengthAdjust="spacingAndGlyphs" stroke="#0b1220" stroke-width="0.5" >2</text>
<text x="71.90" y="141.90" font-size="13.5" fill="#0b1220" font-weight="400" text-anchor="start" textLength="46.50" lengthAdjust="spacingAndGlyphs" >listings</text>
<text x="90.20" y="187.90" font-size="14.5" fill="#0b1220" font-weight="400" text-anchor="start" textLength="47.80" lengthAdjust="spacingAndGlyphs" stroke="#0b1220" stroke-width="0.22" >Default</text>
<text x="89.40" y="216.00" font-size="13" fill="#0b1220" font-weight="400" text-anchor="start" textLength="22.10" lengthAdjust="spacingAndGlyphs" stroke="#0b1220" stroke-width="0.22" >270</text>
<text x="116.00" y="216.00" font-size="13" fill="#0b1220" font-weight="400" text-anchor="start" >/</text>
<text x="124.30" y="216.00" font-size="13" fill="#0b1220" font-weight="400" text-anchor="start" textLength="20.50" lengthAdjust="spacingAndGlyphs" >299</text>
<text x="90.20" y="241.00" font-size="12.5" fill="#0b1220" font-weight="400" text-anchor="start" textLength="133.50" lengthAdjust="spacingAndGlyphs" xml:space="preserve">Booked: 4  Reserved: 4</text>
<text x="89.70" y="265.00" font-size="13" fill="#0b1220" font-weight="400" text-anchor="start" textLength="131.40" lengthAdjust="spacingAndGlyphs" stroke="#0b1220" stroke-width="0.22" xml:space="preserve">£40.00  £12.00  £9.00</text>
<text x="90.20" y="314.00" font-size="14.5" fill="#0b1220" font-weight="400" text-anchor="start" textLength="82.50" lengthAdjust="spacingAndGlyphs" stroke="#0b1220" stroke-width="0.22" >House Seats</text>
<text x="89.80" y="342.20" font-size="13" fill="#0b1220" font-weight="400" text-anchor="start" textLength="26.40" lengthAdjust="spacingAndGlyphs" stroke="#0b1220" stroke-width="0.22" xml:space="preserve">6 / 6</text>
<text x="90.20" y="367.00" font-size="12.5" fill="#0b1220" font-weight="400" text-anchor="start" textLength="135.00" lengthAdjust="spacingAndGlyphs" xml:space="preserve">Booked: 0  Reserved: 0</text>
<text x="89.70" y="390.50" font-size="13" fill="#0b1220" font-weight="400" text-anchor="start" textLength="131.40" lengthAdjust="spacingAndGlyphs" stroke="#0b1220" stroke-width="0.22" xml:space="preserve">£40.00  £12.00  £9.00</text>
<text x="93.50" y="423.90" font-size="11" fill="#9c6a0c" font-weight="400" text-anchor="start" textLength="53.00" lengthAdjust="spacingAndGlyphs" stroke="#9c6a0c" stroke-width="0.22" >ASSIGNED</text>
<text x="167.50" y="423.90" font-size="11" fill="#9c6a0c" font-weight="400" text-anchor="start" textLength="58.00" lengthAdjust="spacingAndGlyphs" stroke="#9c6a0c" stroke-width="0.22" >EXCLUSIVE</text>
<text x="417.25" y="63.70" font-size="14" fill="#8f9bb3" font-weight="400" text-anchor="start" textLength="158.05" lengthAdjust="spacingAndGlyphs" stroke="#8f9bb3" stroke-width="0.22" >Ticket allocation details</text>
<text x="631.60" y="63.70" font-size="14" fill="#2d3748" font-weight="400" text-anchor="start" textLength="73.10" lengthAdjust="spacingAndGlyphs" stroke="#2d3748" stroke-width="0.22" >Seat editor</text>
<text x="489.00" y="107.75" font-size="14" fill="#0b1220" font-weight="400" text-anchor="start" textLength="142.60" lengthAdjust="spacingAndGlyphs" >Display seat indicator</text>
<text x="1681.20" y="108.10" font-size="14" fill="#0b1220" font-weight="400" text-anchor="start" textLength="7.90" lengthAdjust="spacingAndGlyphs" stroke="#0b1220" stroke-width="0.22" >6</text>
<text x="1696.80" y="108.10" font-size="14" fill="#0b1220" font-weight="400" text-anchor="start" textLength="94.80" lengthAdjust="spacingAndGlyphs" >seats selected</text>
<text x="1820.70" y="106.30" font-size="12" fill="#1c9a93" font-weight="400" text-anchor="start" textLength="84.70" lengthAdjust="spacingAndGlyphs" >clear selection</text>
<text x="1680.80" y="157.00" font-size="14" fill="#0b1220" font-weight="400" text-anchor="start" textLength="156.00" lengthAdjust="spacingAndGlyphs" >Select ticket allocation:</text>
<text x="1715.80" y="199.30" font-size="14" fill="#ffffff" font-weight="700" text-anchor="start" textLength="83.20" lengthAdjust="spacingAndGlyphs" >House Seats</text>
<text x="1715.80" y="221.90" font-size="11" fill="#b66a1e" font-weight="400" text-anchor="start" textLength="57.40" lengthAdjust="spacingAndGlyphs" stroke="#b66a1e" stroke-width="0.22" >EXCLUSIVE</text>
<text x="1716.00" y="295.80" font-size="14" fill="#13928c" font-weight="400" text-anchor="start" textLength="75.00" lengthAdjust="spacingAndGlyphs" stroke="#13928c" stroke-width="0.22" >Block seats</text>
<text x="1716.00" y="347.60" font-size="14" fill="#f0435a" font-weight="400" text-anchor="start" textLength="114.40" lengthAdjust="spacingAndGlyphs" stroke="#f0435a" stroke-width="0.22" >De-allocate seats</text>
<text x="567.50" y="235.45" font-size="11.5" fill="#474747" font-weight="400" text-anchor="middle" textLength="6.80" lengthAdjust="spacingAndGlyphs" stroke="#474747" stroke-width="0.5" >N</text>
<text x="1487.80" y="235.45" font-size="11.5" fill="#474747" font-weight="400" text-anchor="middle" textLength="6.80" lengthAdjust="spacingAndGlyphs" stroke="#474747" stroke-width="0.5" >N</text>
<text x="567.50" y="270.84" font-size="11.5" fill="#474747" font-weight="400" text-anchor="middle" textLength="7.80" lengthAdjust="spacingAndGlyphs" stroke="#474747" stroke-width="0.5" >M</text>
<text x="1487.80" y="270.84" font-size="11.5" fill="#474747" font-weight="400" text-anchor="middle" textLength="7.80" lengthAdjust="spacingAndGlyphs" stroke="#474747" stroke-width="0.5" >M</text>
<text x="567.50" y="306.23" font-size="11.5" fill="#474747" font-weight="400" text-anchor="middle" textLength="5.60" lengthAdjust="spacingAndGlyphs" stroke="#474747" stroke-width="0.5" >L</text>
<text x="1487.80" y="306.23" font-size="11.5" fill="#474747" font-weight="400" text-anchor="middle" textLength="5.60" lengthAdjust="spacingAndGlyphs" stroke="#474747" stroke-width="0.5" >L</text>
<text x="567.50" y="341.62" font-size="11.5" fill="#474747" font-weight="400" text-anchor="middle" textLength="6.80" lengthAdjust="spacingAndGlyphs" stroke="#474747" stroke-width="0.5" >K</text>
<text x="1487.80" y="341.62" font-size="11.5" fill="#474747" font-weight="400" text-anchor="middle" textLength="6.80" lengthAdjust="spacingAndGlyphs" stroke="#474747" stroke-width="0.5" >K</text>
<text x="567.50" y="377.01" font-size="11.5" fill="#474747" font-weight="400" text-anchor="middle" textLength="5.40" lengthAdjust="spacingAndGlyphs" stroke="#474747" stroke-width="0.5" >J</text>
<text x="1487.80" y="377.01" font-size="11.5" fill="#474747" font-weight="400" text-anchor="middle" textLength="5.40" lengthAdjust="spacingAndGlyphs" stroke="#474747" stroke-width="0.5" >J</text>
<text x="567.50" y="412.40" font-size="11.5" fill="#474747" font-weight="400" text-anchor="middle" textLength="6.80" lengthAdjust="spacingAndGlyphs" stroke="#474747" stroke-width="0.5" >H</text>
<text x="1487.80" y="412.40" font-size="11.5" fill="#474747" font-weight="400" text-anchor="middle" textLength="6.80" lengthAdjust="spacingAndGlyphs" stroke="#474747" stroke-width="0.5" >H</text>
<text x="567.50" y="447.79" font-size="11.5" fill="#474747" font-weight="400" text-anchor="middle" textLength="6.80" lengthAdjust="spacingAndGlyphs" stroke="#474747" stroke-width="0.5" >G</text>
<text x="1487.80" y="447.79" font-size="11.5" fill="#474747" font-weight="400" text-anchor="middle" textLength="6.80" lengthAdjust="spacingAndGlyphs" stroke="#474747" stroke-width="0.5" >G</text>
<text x="567.50" y="483.18" font-size="11.5" fill="#474747" font-weight="400" text-anchor="middle" textLength="5.80" lengthAdjust="spacingAndGlyphs" stroke="#474747" stroke-width="0.5" >F</text>
<text x="1487.80" y="483.18" font-size="11.5" fill="#474747" font-weight="400" text-anchor="middle" textLength="5.80" lengthAdjust="spacingAndGlyphs" stroke="#474747" stroke-width="0.5" >F</text>
<text x="567.50" y="518.57" font-size="11.5" fill="#474747" font-weight="400" text-anchor="middle" textLength="6.20" lengthAdjust="spacingAndGlyphs" stroke="#474747" stroke-width="0.5" >E</text>
<text x="1487.80" y="518.57" font-size="11.5" fill="#474747" font-weight="400" text-anchor="middle" textLength="6.20" lengthAdjust="spacingAndGlyphs" stroke="#474747" stroke-width="0.5" >E</text>
<text x="567.50" y="553.96" font-size="11.5" fill="#474747" font-weight="400" text-anchor="middle" textLength="6.80" lengthAdjust="spacingAndGlyphs" stroke="#474747" stroke-width="0.5" >D</text>
<text x="1487.80" y="553.96" font-size="11.5" fill="#474747" font-weight="400" text-anchor="middle" textLength="6.80" lengthAdjust="spacingAndGlyphs" stroke="#474747" stroke-width="0.5" >D</text>
<text x="567.50" y="589.35" font-size="11.5" fill="#474747" font-weight="400" text-anchor="middle" textLength="6.60" lengthAdjust="spacingAndGlyphs" stroke="#474747" stroke-width="0.5" >C</text>
<text x="1487.80" y="589.35" font-size="11.5" fill="#474747" font-weight="400" text-anchor="middle" textLength="6.60" lengthAdjust="spacingAndGlyphs" stroke="#474747" stroke-width="0.5" >C</text>
<text x="567.50" y="624.74" font-size="11.5" fill="#474747" font-weight="400" text-anchor="middle" textLength="6.60" lengthAdjust="spacingAndGlyphs" stroke="#474747" stroke-width="0.5" >B</text>
<text x="1487.80" y="624.74" font-size="11.5" fill="#474747" font-weight="400" text-anchor="middle" textLength="6.60" lengthAdjust="spacingAndGlyphs" stroke="#474747" stroke-width="0.5" >B</text>
<text x="567.50" y="660.13" font-size="11.5" fill="#474747" font-weight="400" text-anchor="middle" textLength="7.20" lengthAdjust="spacingAndGlyphs" stroke="#474747" stroke-width="0.5" >A</text>
<text x="1487.80" y="660.13" font-size="11.5" fill="#474747" font-weight="400" text-anchor="middle" textLength="7.20" lengthAdjust="spacingAndGlyphs" stroke="#474747" stroke-width="0.5" >A</text>
<text x="643.20" y="687.90" font-size="10" fill="#555555" font-weight="400" text-anchor="middle" stroke="#555555" stroke-width="0.5" >1</text>
<text x="679.45" y="687.90" font-size="10" fill="#555555" font-weight="400" text-anchor="middle" stroke="#555555" stroke-width="0.5" >2</text>
<text x="714.20" y="687.90" font-size="10" fill="#555555" font-weight="400" text-anchor="middle" stroke="#555555" stroke-width="0.5" >3</text>
<text x="750.20" y="687.90" font-size="10" fill="#555555" font-weight="400" text-anchor="middle" stroke="#555555" stroke-width="0.5" >4</text>
<text x="784.95" y="687.90" font-size="10" fill="#555555" font-weight="400" text-anchor="middle" stroke="#555555" stroke-width="0.5" >5</text>
<text x="820.95" y="687.90" font-size="10" fill="#555555" font-weight="400" text-anchor="middle" stroke="#555555" stroke-width="0.5" >6</text>
<text x="855.95" y="687.90" font-size="10" fill="#555555" font-weight="400" text-anchor="middle" stroke="#555555" stroke-width="0.5" >7</text>
<text x="890.60" y="687.90" font-size="10" fill="#555555" font-weight="400" text-anchor="middle" stroke="#555555" stroke-width="0.5" >8</text>
<text x="925.30" y="687.90" font-size="10" fill="#555555" font-weight="400" text-anchor="middle" stroke="#555555" stroke-width="0.5" >9</text>
<text x="959.95" y="687.90" font-size="10" fill="#555555" font-weight="400" text-anchor="middle" stroke="#555555" stroke-width="0.5" >10</text>
<text x="995.95" y="687.90" font-size="10" fill="#555555" font-weight="400" text-anchor="middle" stroke="#555555" stroke-width="0.5" >11</text>
<text x="1030.70" y="687.90" font-size="10" fill="#555555" font-weight="400" text-anchor="middle" stroke="#555555" stroke-width="0.5" >12</text>
<text x="1065.30" y="687.90" font-size="10" fill="#555555" font-weight="400" text-anchor="middle" stroke="#555555" stroke-width="0.5" >13</text>
<text x="1101.60" y="687.90" font-size="10" fill="#555555" font-weight="400" text-anchor="middle" stroke="#555555" stroke-width="0.5" >14</text>
<text x="1136.30" y="687.90" font-size="10" fill="#555555" font-weight="400" text-anchor="middle" stroke="#555555" stroke-width="0.5" >15</text>
<text x="1168.25" y="687.90" font-size="10" fill="#555555" font-weight="400" text-anchor="middle" stroke="#555555" stroke-width="0.5" >16</text>
<text x="1203.00" y="687.90" font-size="10" fill="#555555" font-weight="400" text-anchor="middle" stroke="#555555" stroke-width="0.5" >17</text>
<text x="1239.10" y="687.90" font-size="10" fill="#555555" font-weight="400" text-anchor="middle" stroke="#555555" stroke-width="0.5" >18</text>
<text x="1273.90" y="687.90" font-size="10" fill="#555555" font-weight="400" text-anchor="middle" stroke="#555555" stroke-width="0.5" >19</text>
<text x="1308.50" y="687.90" font-size="10" fill="#555555" font-weight="400" text-anchor="middle" stroke="#555555" stroke-width="0.5" >20</text>
<text x="1343.25" y="687.90" font-size="10" fill="#555555" font-weight="400" text-anchor="middle" stroke="#555555" stroke-width="0.5" >21</text>
<text x="1379.50" y="687.90" font-size="10" fill="#555555" font-weight="400" text-anchor="middle" stroke="#555555" stroke-width="0.5" >22</text>
<text x="1414.10" y="687.90" font-size="10" fill="#555555" font-weight="400" text-anchor="middle" stroke="#555555" stroke-width="0.5" >23</text>
<text x="960.85" y="376.30" font-size="12" fill="#111" font-weight="400" text-anchor="middle" font-family='Liberation Serif' >R</text>
<text x="996.85" y="376.30" font-size="12" fill="#111" font-weight="400" text-anchor="middle" font-family='Liberation Serif' >R</text>
<text x="1031.60" y="376.30" font-size="12" fill="#111" font-weight="400" text-anchor="middle" font-family='Liberation Serif' >R</text>
<text x="1066.20" y="376.30" font-size="12" fill="#111" font-weight="400" text-anchor="middle" font-family='Liberation Serif' >R</text>
<text x="598.70" y="724.40" font-size="11.5" fill="#505050" font-weight="400" text-anchor="start" textLength="20.50" lengthAdjust="spacingAndGlyphs" stroke="#505050" stroke-width="0.22" >EXIT</text>
<text x="1439.50" y="721.30" font-size="11.5" fill="#505050" font-weight="400" text-anchor="start" textLength="20.50" lengthAdjust="spacingAndGlyphs" stroke="#505050" stroke-width="0.22" >EXIT</text>
<text x="1458.60" y="205.80" font-size="11.5" fill="#505050" font-weight="400" text-anchor="start" textLength="20.40" lengthAdjust="spacingAndGlyphs" stroke="#505050" stroke-width="0.22" >EXIT</text>
<text x="984.20" y="807.40" font-size="31.5" fill="#7a7a7a" font-weight="400" text-anchor="start" textLength="85.20" lengthAdjust="spacingAndGlyphs" >STAGE</text>
</svg>
</body></html>
